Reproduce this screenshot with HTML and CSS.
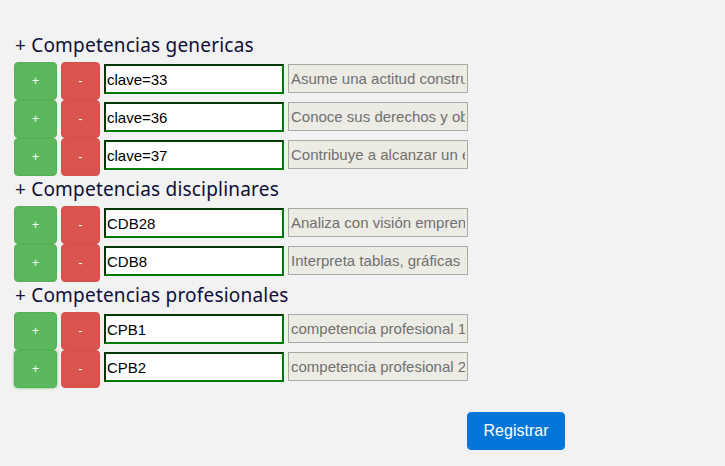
FILE: index.html
```html
<!DOCTYPE html>
<html lang="es">
<head>
<meta charset="utf-8">
<title>Competencias</title>
<link rel="stylesheet" href="styles.css">
</head>
<body>
<div class="page">
  <section class="group">
    <h2 class="group-title">+ Competencias genericas</h2>
    <div class="row">
      <button class="btn btn-add">+</button>
      <button class="btn btn-del">-</button>
      <input class="key" type="text" value="clave=33">
      <input class="desc" type="text" value="Asume una actitud constructiva" disabled>
    </div>
    <div class="row">
      <button class="btn btn-add">+</button>
      <button class="btn btn-del">-</button>
      <input class="key" type="text" value="clave=36">
      <input class="desc" type="text" value="Conoce sus derechos y obligaciones" disabled>
    </div>
    <div class="row">
      <button class="btn btn-add">+</button>
      <button class="btn btn-del">-</button>
      <input class="key" type="text" value="clave=37">
      <input class="desc" type="text" value="Contribuye a alcanzar un equilibrio" disabled>
    </div>
  </section>
  <section class="group">
    <h2 class="group-title">+ Competencias disciplinares</h2>
    <div class="row">
      <button class="btn btn-add">+</button>
      <button class="btn btn-del">-</button>
      <input class="key" type="text" value="CDB28">
      <input class="desc" type="text" value="Analiza con visión emprendedora" disabled>
    </div>
    <div class="row">
      <button class="btn btn-add">+</button>
      <button class="btn btn-del">-</button>
      <input class="key" type="text" value="CDB8">
      <input class="desc" type="text" value="Interpreta tablas, gráficas y mapas" disabled>
    </div>
  </section>
  <section class="group">
    <h2 class="group-title">+ Competencias profesionales</h2>
    <div class="row">
      <button class="btn btn-add">+</button>
      <button class="btn btn-del">-</button>
      <input class="key" type="text" value="CPB1">
      <input class="desc" type="text" value="competencia profesional 1" disabled>
    </div>
    <div class="row">
      <button class="btn btn-add btn-focus">+</button>
      <button class="btn btn-del">-</button>
      <input class="key" type="text" value="CPB2">
      <input class="desc" type="text" value="competencia profesional 2" disabled>
    </div>
  </section>
  <div class="actions">
    <button class="btn-submit">Registrar</button>
  </div>
</div>
</body>
</html>
```
FILE: styles.css
```css
html, body {
  margin: 0;
  padding: 0;
  background: #f2f2f2;
}
.page {
  padding: 32px 0 0 14px;
}
.group-title {
  margin: 0;
  padding-left: 1px;
  height: 30px;
  line-height: 26px;
  font-family: "Noto Sans", sans-serif;
  font-weight: 400;
  font-size: 19px;
  letter-spacing: 0.2px;
  color: #0e0e3a;
}
.row {
  display: flex;
  align-items: flex-start;
  height: 38px;
}
.btn {
  box-sizing: border-box;
  height: 38px;
  border: 1px solid transparent;
  border-radius: 4px;
  color: #fff;
  font-family: "Liberation Sans", Arial, sans-serif;
  font-size: 12px;
  padding: 0;
  margin-right: 4px;
}
.btn-add {
  width: 43px;
  background: #5cb85c;
  border-color: #55b055;
}
.btn-del {
  width: 39px;
  background: #d9534f;
  border-color: #d4504c;
}
.btn-focus {
  box-shadow: 0 0 2px 1px rgba(92, 184, 92, 0.45);
}
.key {
  box-sizing: border-box;
  width: 180px;
  height: 30px;
  margin: 2px 4px 0 0;
  padding: 0 1px;
  border: 2px solid;
  border-color: #053805 #007a00 #007a00 #053805;
  background: #fff;
  font-family: "Liberation Sans", Arial, sans-serif;
  font-size: 15px;
  color: #000;
}
.desc {
  box-sizing: border-box;
  width: 180px;
  height: 29px;
  margin: 2px 0 0 0;
  padding: 0 2px;
  border: 1px solid #a9a9a9;
  background: #ecebe4;
  font-family: "Liberation Sans", Arial, sans-serif;
  font-size: 15px;
  color: #707070;
}
.actions {
  padding: 24px 0 0 453px;
}
.btn-submit {
  width: 98px;
  height: 38px;
  border: 1px solid #0074d9;
  border-radius: 4px;
  background: #0275d8;
  color: #fff;
  font-family: "Liberation Sans", Arial, sans-serif;
  font-size: 16px;
  padding: 0;
}
```
